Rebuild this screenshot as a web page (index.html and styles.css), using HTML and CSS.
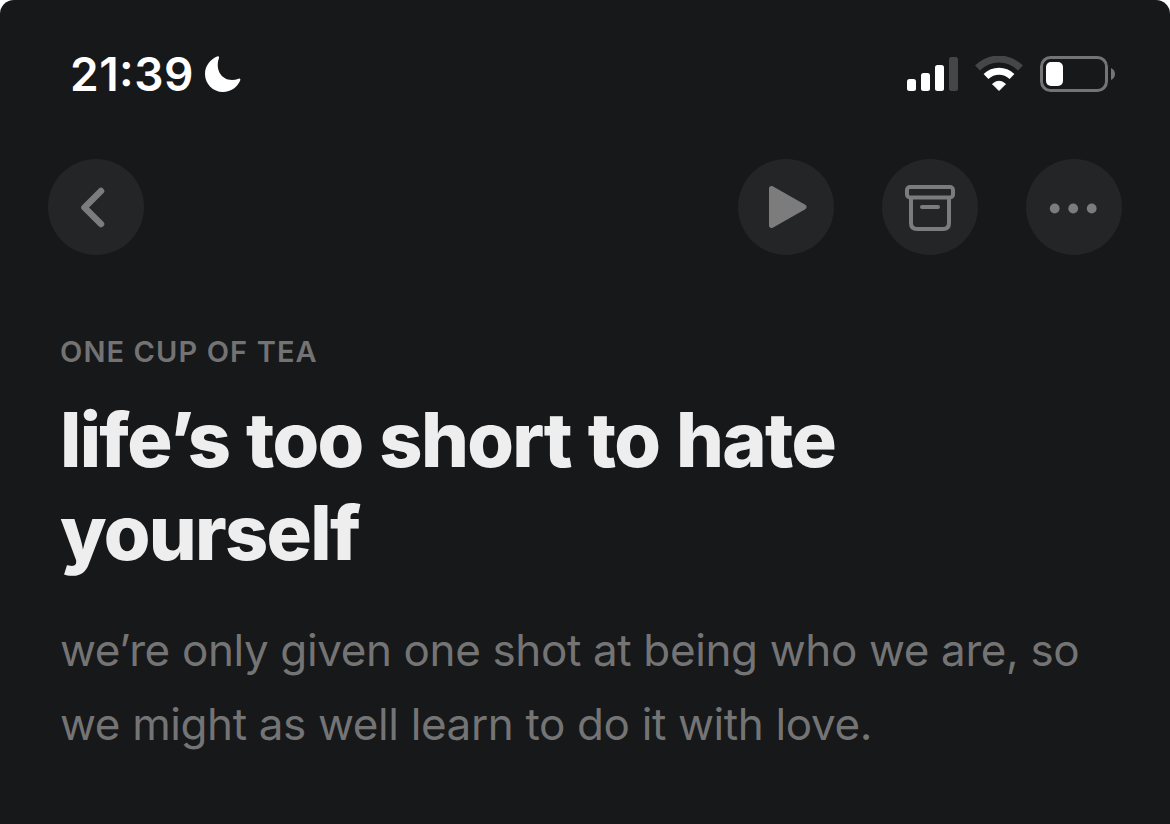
FILE: index.html
```html
<!DOCTYPE html>
<html lang="en">
<head>
    <meta charset="UTF-8">
    <meta name="viewport" content="width=device-width, initial-scale=1.0">
    <title>One Cup of Tea</title>
    <link rel="stylesheet" href="styles.css">
</head>
<body>

    <div class="screen">
        <div class="status-bar">
            <div class="clock">
                <span class="time">21:39</span>
                <svg class="moon" width="38" height="38" viewBox="0 0 38 38">
                    <path d="M13 1.500Q15.500 0.500 15 3C11 14 17 25 28 25Q31.500 25 34.500 23.800Q37 23 36.200 25.500C33.500 32 27 37 19 37C9 37 1 29 1 19C1 11 6 4.500 13 1.500Z" fill="#fff"/>
                </svg>
            </div>
            <div class="indicators">
                <svg class="signal" width="51" height="36" viewBox="0 0 51 36">
                    <rect x="0" y="23" width="9" height="12" rx="2.500" fill="#fff"/>
                    <rect x="14" y="17" width="9" height="18" rx="2.500" fill="#fff"/>
                    <rect x="28" y="9" width="9" height="26" rx="2.500" fill="#fff"/>
                    <rect x="42" y="1" width="9" height="34" rx="2.500" fill="#454648"/>
                </svg>
                <svg class="wifi" width="48" height="36" viewBox="0 0 48 36">
                    <path d="M2.500 12C15 0 33 0 45.500 12" fill="none" stroke="#454648" stroke-width="7"/>
                    <path d="M11 20.500C18.500 13.500 29.500 13.500 37 20.500" fill="none" stroke="#fff" stroke-width="7"/>
                    <path d="M17.500 28Q24 22.500 30.500 28L24 34.500Z" fill="#fff" stroke="#fff" stroke-linejoin="round"/>
                </svg>
                <svg class="battery" width="76" height="36" viewBox="0 0 76 36">
                    <rect x="1.500" y="1.500" width="65" height="33" rx="9" fill="none" stroke="#747475" stroke-width="3"/>
                    <rect x="6" y="6" width="17" height="24" rx="5" fill="#fff"/>
                    <path d="M71 12Q75 14 75 18Q75 22 71 24Z" fill="#747475"/>
                </svg>
            </div>
        </div>

        <div class="toolbar">
            <button class="round-button" aria-label="Back">
                <svg width="96" height="96" viewBox="0 0 96 96">
                    <path d="M53 32L36.500 48.500L53 65" fill="none" stroke="#7c7c7d" stroke-width="6.500" stroke-linecap="round" stroke-linejoin="round"/>
                </svg>
            </button>
            <div class="actions">
                <button class="round-button" aria-label="Play">
                    <svg width="96" height="96" viewBox="0 0 96 96">
                        <path d="M33.500 29.500L66 48L33.500 66.500Z" fill="#7c7c7d" stroke="#7c7c7d" stroke-width="5" stroke-linejoin="round"/>
                    </svg>
                </button>
                <button class="round-button" aria-label="Archive">
                    <svg width="96" height="96" viewBox="0 0 96 96" fill="none" stroke="#7c7c7d" stroke-width="4" stroke-linecap="round">
                        <rect x="25" y="28" width="46" height="10.500" rx="3"/>
                        <path d="M29 39V64Q29 70 35 70H61Q67 70 67 64V39M40 48H56"/>
                    </svg>
                </button>
                <button class="round-button" aria-label="More">
                    <svg width="96" height="96" viewBox="0 0 96 96" fill="#7c7c7d">
                        <circle cx="28.700" cy="49.500" r="4.900"/>
                        <circle cx="47.200" cy="49.500" r="4.900"/>
                        <circle cx="65.700" cy="49.500" r="4.900"/>
                    </svg>
                </button>
            </div>
        </div>

        <div class="post">
            <div class="publication">ONE CUP OF TEA</div>
            <h1>life’s too short to hate yourself</h1>
            <p>we’re only given one shot at being who we are, so we might as well learn to do it with love.</p>
        </div>
    </div>

</body>
</html>
```

FILE: styles.css
```css
* {
    box-sizing: border-box;
}
body {
    margin: 0;
    background: #fff;
    font-family: Inter, sans-serif;
}
.screen {
    height: 824px;
    background: #17181a;
    border-radius: 14px 14px 0 0;
    overflow: hidden;
}
.status-bar {
    display: flex;
    justify-content: space-between;
    align-items: center;
    height: 148px;
    padding: 0 54px 0 70px;
}
.clock, .indicators {
    display: flex;
    align-items: center;
}
.clock {
    gap: 10px;
}
.time {
    color: #fff;
    font-size: 46px;
    font-weight: 600;
    line-height: 56px;
    letter-spacing: 0.5px;
    font-feature-settings: "case";
}
.indicators {
    gap: 17px;
}
.toolbar {
    display: flex;
    justify-content: space-between;
    padding: 11px 48px 0;
}
.actions {
    display: flex;
    gap: 48px;
}
.round-button {
    width: 96px;
    height: 96px;
    padding: 0;
    border: none;
    border-radius: 50%;
    background: #242527;
}
.round-button svg {
    display: block;
}
.post {
    padding: 79px 60px 0;
}
.publication {
    color: #737374;
    font-size: 29px;
    font-weight: 600;
    line-height: 36px;
    letter-spacing: 1.1px;
}
h1 {
    margin: 23px 0 0;
    color: #eee;
    font-size: 75.5px;
    font-weight: 800;
    line-height: 93px;
    letter-spacing: -1.7px;
    word-spacing: 2px;
}
p {
    margin: 34px 0 0;
    color: #747475;
    font-size: 44px;
    line-height: 74px;
    letter-spacing: -0.4px;
    word-spacing: 0.1px;
}
```
